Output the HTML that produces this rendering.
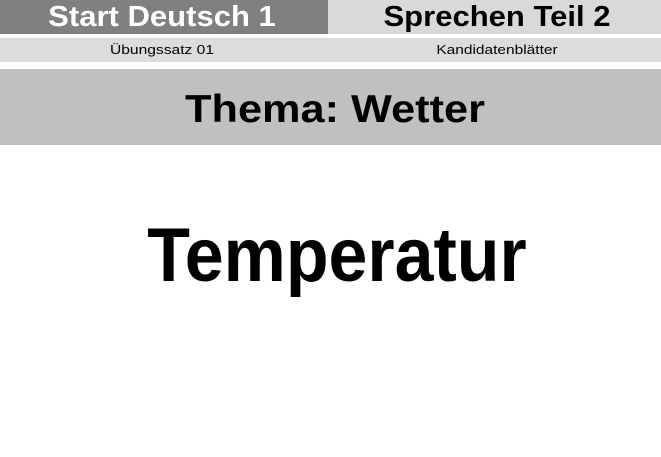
<!DOCTYPE html>
<html><head><style>
body{margin:0;width:661px;height:457px;background:#fff;position:relative;overflow:hidden;font-family:"Liberation Sans",sans-serif;}
.a{position:absolute;}
.t{position:absolute;white-space:nowrap;transform-origin:center;font-weight:bold;}
</style></head><body>
<div class="a" style="left:0;top:0;width:328px;height:34px;background:#808080"></div>
<div class="a" style="left:328px;top:0;width:333px;height:34px;background:#d9d9d9"></div>
<div class="a" style="left:0;top:38px;width:661px;height:24px;background:#dcdcdc"></div>
<div class="a" style="left:0;top:69px;width:661px;height:76px;background:#c0c0c0"></div>
<div class="t" style="left:162px;top:1px;font-size:29px;line-height:32px;color:#fff;transform:translateX(-50%) scaleX(1.07)">Start Deutsch 1</div>
<div class="t" style="left:497px;top:1px;font-size:29px;line-height:32px;color:#000;transform:translateX(-50%) scaleX(1.07)">Sprechen Teil 2</div>
<div class="t" style="left:162px;top:42px;font-size:13px;line-height:16px;font-weight:normal;transform:translateX(-50%) scaleX(1.2)">Übungssatz 01</div>
<div class="t" style="left:497px;top:42px;font-size:13px;line-height:16px;font-weight:normal;transform:translateX(-50%) scaleX(1.19)">Kandidatenblätter</div>
<div class="t" style="left:335px;top:87px;font-size:39px;line-height:46px;transform:translateX(-50%) scaleX(1.11)">Thema: Wetter</div>
<div class="t" style="left:337px;top:214px;font-size:76px;line-height:84px;transform:translateX(-50%) scaleX(.92)">Temperatur</div>
</body></html>
